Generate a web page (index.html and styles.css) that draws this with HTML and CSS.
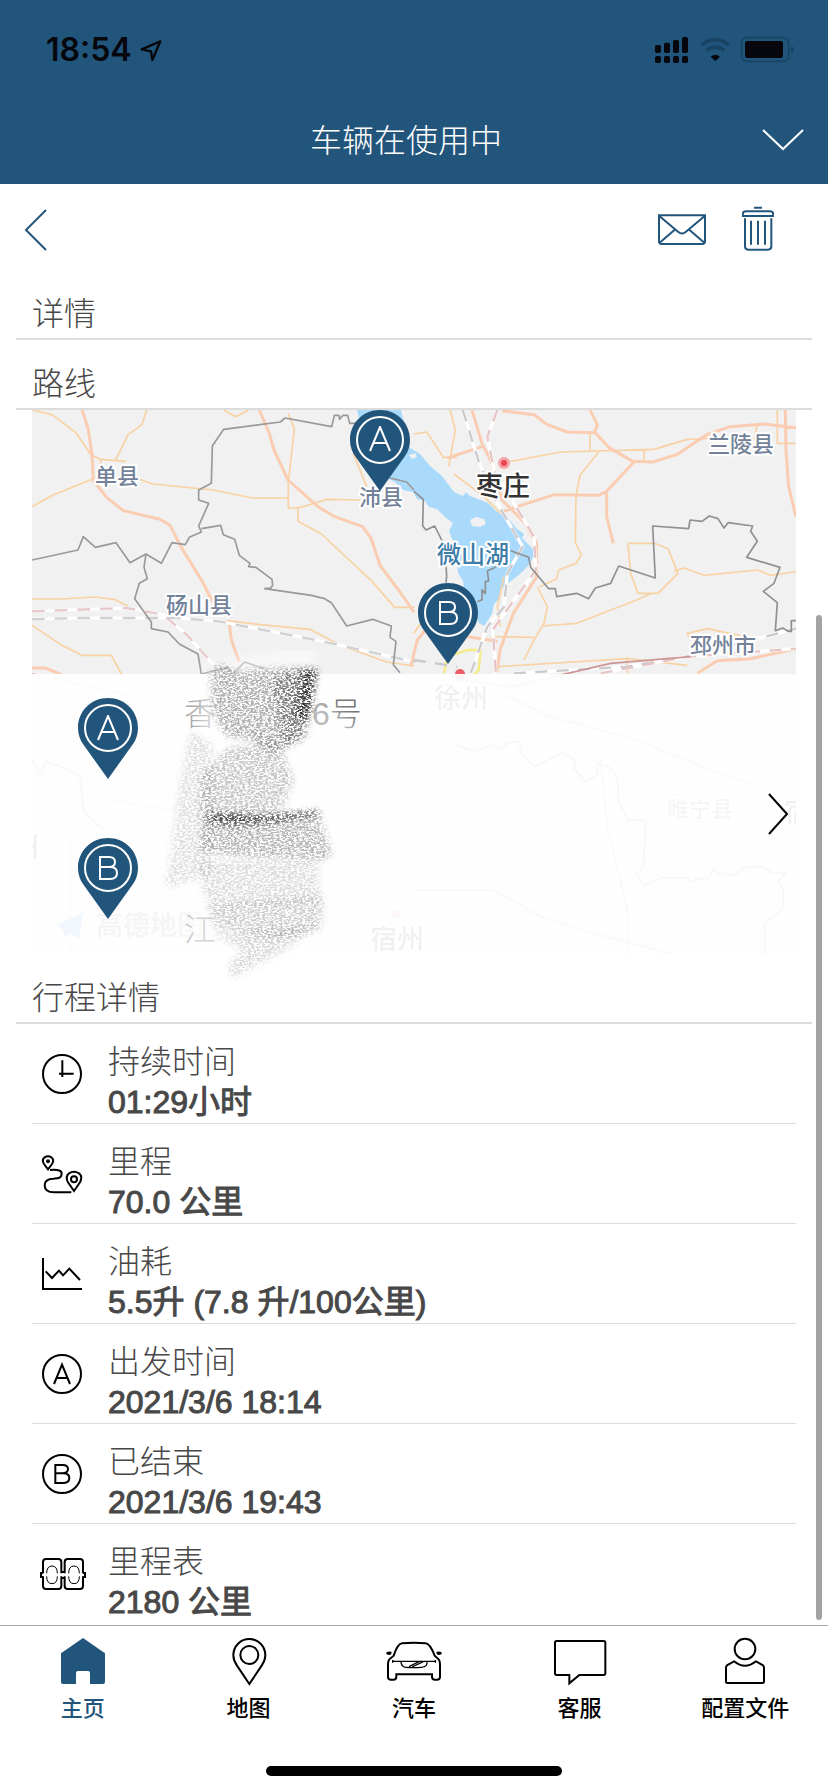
FILE: index.html
```html
<!DOCTYPE html>
<html lang="zh-CN">
<head>
<meta charset="utf-8">
<meta name="viewport" content="width=device-width, initial-scale=1">
<title>行程详情</title>
<link rel="stylesheet" href="styles.css">
</head>
<body>
<svg class="defs" width="0" height="0" aria-hidden="true">
  <defs>
    <symbol id="pin" viewBox="0 0 60 82">
      <path d="M30 0C13 0 0 13 0 30c0 6 2 12 5 16l25 35 25-35c3-4 5-10 5-16C60 13 47 0 30 0z" fill="#22557c"/>
      <circle cx="30" cy="30" r="23" fill="none" stroke="#fff" stroke-width="2"/>
    </symbol>
    <symbol id="letter-a" viewBox="0 0 24 26"><path d="M2 25 12 1l10 24M6 17h12" fill="none" stroke="currentColor" stroke-width="2"/></symbol>
    <symbol id="letter-b" viewBox="0 0 24 26"><path d="M4 2v22h10q7 0 7-6t-7-6H4h9q6 0 6-5t-6-5z" fill="none" stroke="currentColor" stroke-width="2"/></symbol>
  </defs>
</svg>

<header class="header">
  <div class="status">
    <div class="clock">
      <span>18:54</span>
      <svg width="22" height="22" viewBox="417 115 66 66" aria-hidden="true"><path d="M478 122 422 146l28 6 4 26z" fill="none" stroke="#05070c" stroke-width="7" stroke-linejoin="round"/></svg>
    </div>
    <svg width="142" height="30" viewBox="720 105 426 90" aria-hidden="true">
      <g fill="#05070c">
        <rect x="723" y="135" width="18" height="24" rx="5"/><rect x="750" y="128" width="18" height="31" rx="5"/><rect x="777" y="120" width="18" height="39" rx="5"/><rect x="804" y="111" width="18" height="48" rx="5"/>
        <rect x="723" y="168" width="18" height="21" rx="5"/><rect x="750" y="168" width="18" height="21" rx="5"/><rect x="777" y="168" width="18" height="21" rx="5"/><rect x="804" y="168" width="18" height="21" rx="5"/>
        <path d="M890 170q14-12 28 0l-14 13z"/>
        <rect x="993" y="123" width="114" height="51" rx="7"/>
      </g>
      <g fill="none" stroke="#184463">
        <path d="M863 135q41-32 82 0M877 152q27-21 54 0" stroke-width="11"/>
        <rect x="983" y="113" width="141" height="71" rx="16" stroke-width="5"/>
      </g>
      <path d="M1131 137q9 4 9 12t-9 12z" fill="#184463"/>
    </svg>
  </div>
  <div class="titlebar">
    <h1 class="title">车辆在使用中</h1>
    <button class="icon-button expand" aria-label="展开">
      <svg width="42" height="22" viewBox="0 0 42 22"><path d="M1 1l20 19L41 1" fill="none" stroke="#fff" stroke-width="2"/></svg>
    </button>
  </div>
</header>

<main class="content">
  <div class="toolbar">
    <button class="icon-button" aria-label="返回">
      <svg width="24" height="46" viewBox="0 0 24 46"><path d="M22 4 2 24l20 20" fill="none" stroke="#22557c" stroke-width="2"/></svg>
    </button>
    <div class="actions">
      <button class="icon-button" aria-label="发送邮件">
        <svg width="48" height="46" viewBox="732 616 144 138"><g fill="none" stroke="#22557c" stroke-width="6"><path d="M735 644h138v78q0 8-8 8H743q-8 0-8-8zM735 645l58 49q11 9 22 0l58-49M736 727l48-41M872 727l-48-41"/></g></svg>
      </button>
      <button class="icon-button" aria-label="删除">
        <svg width="32" height="46" viewBox="984 616 96 138"><g fill="none" stroke="#22557c" stroke-width="6"><path d="M1020 621h24M986 646v-4q0-10 10-10h72q10 0 10 10v4zM993 653v84q0 10 10 10h59q10 0 10-10v-84M1011 660v72M1032 660v72M1053 660v72"/></g></svg>
      </button>
    </div>
  </div>

  <h2 class="heading">详情</h2>
  <h2 class="heading">路线</h2>

  <section class="map" aria-label="路线">
    <svg class="map-canvas" viewBox="32 410 764 544" preserveAspectRatio="xMidYMid slice">
      <rect x="32" y="410" width="764" height="544" fill="#f1f1f1"/>
      <path fill="#a9dafc" d="M357 410h44l9 38 10 6 10 12 12 10 12 16 9 4 3-4 4 4 18 7 8 8 12 7 8 10 8 6-2 4 14 14-8 14-8 8-18 14-4 12-4 4-2 10-8 12-5-3-8-20-6-4-2-18-5-8-1-10-8-16 4-6-4-10 4-8-8-6-8-8-8-2-4-6-8-2-4-7-10-2-8-8-24-12z"/>
      <path fill="#f1f1f1" d="M470 520l6-3 8 2 2 5-6 3-8-1zM409 455l6-2 2 4-5 2z"/>
      <g transform="translate(0 280) scale(.33333)" fill="none" stroke-linejoin="round">
        <g stroke="#f8d2a2" stroke-width="5">
          <path d="M96 390l60 14 72 54 46 68 28 12 76 6M440 390l-14 44-42 30-38 78M96 680l62-34 122-50M418 598l40 14 180 18 120 24h108M865 400l18 46-18 160v78h30l86-26 100 2M894 680v44l70 38 150 140 70 80h60M1060 520l40 100M672 390l34 20 40-20M96 957h90l100-6 60 8 38 20M96 1036l90 60 60 30h88l30 56M680 1022l100 12 150 14 90 48 140 50 82 12M302 540v20"/>
        </g>
        <g stroke="#facdb2" stroke-width="9"><path d="M246 390l18 54 12 80 4 78 40 50 50 40 110 26 30 18 36 70 62 100 30 60M778 390l30 70 14 50 42 90 90 80 50 30 84 30 26 36 26 80 60 80 42 60M688 1030l6 50 24 66M96 1164h40l48 20"/></g>
        <g stroke="#fff" stroke-width="9"><path d="M96 994l284-10 110 20 70 60 90 100M96 1018l140-4h300l120 10 310 60 280 62"/></g>
        <g stroke="#e6c9cb" stroke-width="7" stroke-dasharray="38 30"><path d="M96 994l284-10 110 20 70 60 90 100"/></g>
        <g stroke="#cfd0d3" stroke-width="7" stroke-dasharray="38 30"><path d="M96 1018l140-4h300l120 10 310 60 280 62"/></g>
        <g stroke="#999" stroke-width="5"><path d="M96 840l138-30 16-40 36 32 62-14 42 60 48-26 46 28 32-62 40 6 12-22 36-16-8-18 30-68-30-10v-30l38-20 3-112 34-50 170-22 14-12 140 26 8-34h14l2 12 10-12h14l6 24h40M1170 594l50 12 22 24M604 746l58-10 8 28 34 14 14 48 32 24-4 10 22 2 48 36 2 18-6 8-18 2 140 20 40 10 20 12 46 70 78-20 56 20-4 34 18 12-8 70 20 24M438 822l-6 40 10 34-24 14-14 46 50 70v20l50 10 34 36 56 30 10 60 80-20 14 20 36-36 60 20"/></g>
      </g>
      <g transform="translate(414 380) scale(.33333)" fill="none" stroke-linejoin="round">
        <g stroke="#f8d2a2" stroke-width="5">
          <path d="M0 162l38-6 50 76h40M108 90l16 60-20 110M120 282l90 68 50 50M280 246l160-30 280-8 100-30 90-4M528 160v50M690 210v38M554 216l-56 70-12 60-2 140 18 40-16 24-52 20-6 26-50 24M642 490h80l40 16 30 74-60 60h-60l-22-60-8-88M780 574l30-10 60 22 160-16 40 16 80-12M384 738l104-8 180-70 46-20M370 620l30 60-10 50-30 50-30 60M640 830v50M250 860l390-24 180 20M830 780l-10-20 60-14 140 30M1090 90v100h54M1030 130l-10 50M270 590l-20 90 10 60M230 770l130 2M0 760l40-60"/>
        </g>
        <g stroke="#facdb2" stroke-width="9"><path d="M174 90l30 100 30 60 30 110 70 70 34 60v100l-70 110-40 110-10 70M264 92l96 12 40 30 60 22 84 2 40 44 72 42 60 2 72-22 90-60 70-24 102-8 100 12M528 90l22 44-8 22M660 246l-84 90-24 10-130-2-94 30-60 20M578 340v70l20 80M1114 90l2 120 8 110 22 90M100 234l104-34M160 770l90 14M850 880l60-38 100-6 136-30M-10 860l20-80 40-50"/></g>
        <g stroke="#f4ec80" stroke-width="7"><path d="M90 880l10-50 60-20h40l-6 60-20 20"/></g>
        <g stroke="#fff" stroke-width="10"><path d="M146 90l50 160 60 130 70 120-46 80-10 100-50 60-50 140M300 880l340-20 200-34 306-80M250 90l-30 80 20 100 60 100 60 100 6 100-80 110-50 70 10 130M560 880l260-50 326-24"/></g>
        <g stroke="#cbc9ce" stroke-width="7" stroke-dasharray="36 28"><path d="M146 90l50 160 60 130 70 120-46 80-10 100-50 60-50 140M300 880l340-20 200-34 306-80M0 840l130 20"/></g>
        <g stroke="#e6c5c6" stroke-width="7" stroke-dasharray="36 28"><path d="M250 90l-30 80 20 100 60 100 60 100 6 100-80 110-50 70 10 130M560 880l260-50 326-24"/></g>
        <g stroke="#8f9091" stroke-width="5"><path d="M0 334l28 24-2 80 10 12 26-12 30 60 6 90-2 20M190 665l14-6v-30l10 12v-36l10-2-4-30 26-12M290 512l54 20 6 30 54 64h20l4 24 60-10 36 16 20-32 46-14 24-52 110 36-8-156 108 8 4-26 36 4 22-16 26 8 18 28 12-16 74 10-6 16 20 30-32 48 100 30-18 48-32 24 42 34-6 84 22-8 16 10h10v-32h22"/></g>
        <g stroke="#cd9696" stroke-width="5"><path d="M20 940l120-40 150 20 300-70 240-20M280 950l130 60 260 70 220 90 120 40M560 1140l20 200 60 250v130M0 1530h240l140 80 160 50 260 70"/></g>
        <g stroke="#888" stroke-width="5"><path d="M130 1095l50 18 60-18 24 12 16-18 32-4 10 22-4 12 42 40 88-42 36 26-2 24 32 40 34-20 4-38 32 12 26 30 4 80 30 50h52l-8 140-20 22 22 34 54-24 74 2 20 12 8-12 34 4 20-36 12 20 24-4 20 8 40-26h50l30 18h40l-24 26 16 20v60l-56 46v100"/></g>
      </g>
      <g fill="none" stroke="#dcb2b2" stroke-width="2"><path d="M32 800h80l80 14M70 840v112M32 674l90 20 60 34"/><path stroke="#999" d="M32 760l8 14 6-12 14 4 20 10 4 36 20 18"/></g>
      <g class="place">
        <text x="95" y="484">单县</text><text x="359" y="505">沛县</text><text x="166" y="613">砀山县</text>
        <text x="708" y="452">兰陵县</text><text x="690" y="653">邳州市</text><text x="667" y="817">睢宁县</text>
      </g>
      <circle cx="504" cy="463" r="6" fill="#f5a5a8"/><circle cx="504" cy="463" r="3" fill="#e6454c"/>
      <circle cx="460" cy="674" r="5" fill="#ec5f66"/>
      <circle cx="396" cy="914" r="4" fill="#f28a8e"/>
      <g class="city">
        <text x="476" y="496">枣庄</text><text x="434" y="708">徐州</text><text x="370" y="949">宿州</text><text x="784" y="822">宿迁</text><text x="12" y="857">州</text>
      </g>
      <text class="lake" x="437" y="563">微山湖</text>
      <path d="M56 925l28-13-5 27-10-6-5 5-1-8z" fill="#4a94ea"/>
      <text class="brand" x="96" y="935">高德地图</text>
      <g color="#fff">
        <use href="#pin" x="350" y="410" width="60" height="82"/><use href="#letter-a" x="368" y="426" width="24" height="26"/>
        <use href="#pin" x="418" y="583" width="60" height="82"/><use href="#letter-b" x="436" y="600" width="24" height="26"/>
      </g>
    </svg>
    <button class="route" aria-label="查看路线">
      <span class="stops">
        <span class="stop">
          <svg width="60" height="82" viewBox="0 0 60 82" color="#fff"><use href="#pin" width="60" height="82"/><use href="#letter-a" x="18" y="17" width="24" height="26"/></svg>
          <span class="address"><span>香</span><span class="number">6号</span></span>
        </span>
        <span class="stop">
          <svg width="60" height="82" viewBox="0 0 60 82" color="#fff"><use href="#pin" width="60" height="82"/><use href="#letter-b" x="18" y="17" width="24" height="26"/></svg>
          <span class="address last">江</span>
        </span>
      </span>
      <svg width="22" height="42" viewBox="0 0 22 42"><path d="M2 1l18 20L2 41" fill="none" stroke="#000" stroke-width="2"/></svg>
    </button>
    <svg class="scribble" width="220" height="340" viewBox="150 650 220 340" aria-hidden="true">
      <defs>
        <filter id="chalk" x="-10%" y="-10%" width="120%" height="120%">
          <feGaussianBlur in="SourceGraphic" stdDeviation="3" result="soft"/>
          <feTurbulence type="fractalNoise" baseFrequency=".35 .6" numOctaves="4" seed="4"/>
          <feColorMatrix values="0 0 0 0 0  0 0 0 0 0  0 0 0 0 0  5 0 0 0 -2"/>
          <feComposite in="soft" operator="in"/>
        </filter>
        <filter id="mist"><feGaussianBlur stdDeviation="6"/></filter>
      </defs>
      <path opacity=".5" fill="#fff" filter="url(#mist)" d="M205 664l110-20v50l50 40-20 240-160-20z"/>
      <g fill="#222" filter="url(#chalk)">
        <path opacity=".35" d="M210 672l12-8 14 8 34-4 44 0-12 70-28 16-24-14-24-4-14-24z"/>
        <path opacity=".4" d="M272 680l20-10 24-2-10 70-22 10z"/>
        <path opacity=".25" d="M228 748l50-8 16 40-12 30-82 10 2-46z"/>
        <path opacity=".15" d="M190 730l22 14-2 130-44 14 12-90z"/>
        <path opacity=".32" d="M204 816l114-4 14 42-8 6-90-4-34-4z"/>
        <path opacity=".16" d="M200 860h118l2 40-110 8-8-20z"/>
        <path opacity=".22" d="M208 906l116-10-4 34-40 8-66-10z"/>
        <path opacity=".18" d="M212 934l106-8-40 28-46 24-4-14 16-14z"/>
      </g>
      <g fill="#111" filter="url(#chalk)"><path opacity=".7" d="M304 670h14l-9 50h-14zM210 813l60 2 50-4v4l-56 8-30 2-24-2z"/></g>
    </svg>
  </section>

  <h2 class="heading">行程详情</h2>
  <ul class="rows">
    <li class="row">
      <svg class="row-icon" viewBox="126 132 120 120"><g fill="none" stroke="#000" stroke-width="6"><circle cx="186" cy="192" r="57"/><path d="M187 151v50M177 191h44"/></g></svg>
      <dl class="fact"><dt>持续时间</dt><dd>01:29小时</dd></dl>
    </li>
    <li class="row">
      <svg class="row-icon" viewBox="126 434 120 120"><g fill="none" stroke="#000" stroke-width="6"><path d="M144 480l-12-16q-8-13 2-20 10-7 20 0 10 8 2 20zM222 545l-18-26q-9-18 3-27 15-9 30 0 12 10 3 27zM150 482c26-2 36 2 35 13-1 12-12 12-24 13-20 0-27 7-27 20 0 14 10 21 28 21h52"/><circle cx="222" cy="510" r="9"/></g><circle cx="144" cy="456" r="6"/></svg>
      <dl class="fact"><dt>里程</dt><dd>70.0 公里</dd></dl>
    </li>
    <li class="row">
      <svg class="row-icon" viewBox="126 732 120 120"><path d="M129 744v93h117M137 784l19 20 21-22 12 14 19-20 32 34" fill="none" stroke="#000" stroke-width="6"/></svg>
      <dl class="fact"><dt>油耗</dt><dd>5.5升 (7.8 升/100公里)</dd></dl>
    </li>
    <li class="row">
      <svg class="row-icon" viewBox="126 102 120 120"><g fill="none" stroke="#000" stroke-width="6"><circle cx="186" cy="162" r="57"/><path d="M162 192l24-58 24 58M170 174h32"/></g></svg>
      <dl class="fact"><dt>出发时间</dt><dd>2021/3/6 18:14</dd></dl>
    </li>
    <li class="row">
      <svg class="row-icon" viewBox="126 402 120 120"><g fill="none" stroke="#000" stroke-width="6"><circle cx="186" cy="462" r="57"/><path d="M166 435v54h22q20 0 20-15t-20-14h-22 20q18 0 18-13t-18-12z"/></g></svg>
      <dl class="fact"><dt>已结束</dt><dd>2021/3/6 19:43</dd></dl>
    </li>
    <li class="row">
      <svg class="row-icon" viewBox="126 702 120 120"><g fill="none" stroke="#000" stroke-width="6"><path d="M129 760v-34q0-9 9-9h37q9 0 9 9v34M129 769v29q0 9 9 9h37q9 0 9-9v-29M194 760v-34q0-9 9-9h37q9 0 9 9v34M194 769v29q0 9 9 9h37q9 0 9-9v-29M129 759h-6v12h6M249 759h6v12h-6"/><path d="M184 756h10M184 774h10"/><path stroke-width="3" d="M140 760q0-22 16-22t16 22M140 769q0 22 16 22t16-22M206 760q0-22 16-22t16 22M206 769q0 22 16 22t16-22"/></g></svg>
      <dl class="fact"><dt>里程表</dt><dd>2180 公里</dd></dl>
    </li>
  </ul>
  <div class="scrollbar"></div>
</main>

<footer class="footer">
  <nav class="tabs">
    <a class="tab active" href="#home"><svg viewBox="159 108 180 150"><path d="M249 114l66 46v86q0 6-6 6h-39v-33q0-6-6-6h-30q-6 0-6 6v33h-39q-6 0-6-6v-86z" fill="#22557c"/></svg>主页</a>
    <a class="tab" href="#map"><svg viewBox="656 108 180 150"><g class="line"><path d="M750 252l-37-55q-11-16-11-31a48 49 0 0 1 96 0q0 15-11 31z"/><circle cx="750" cy="165" r="27"/></g></svg>地图</a>
    <a class="tab" href="#car"><svg viewBox="28 48 180 150"><g class="line"><path d="M57 107q12-36 25-37 35-4 71 0 13 1 27 37l12 11q4 5 4 14v39q0 8-9 8h-6q-9 0-9-9v-7H65v7q0 9-9 9h-7q-9 0-9-8v-39q0-9 4-14z"/><path stroke-width="4" d="M54 120v8M54 124h25M182 120v8M182 124h-25M79 124h78q2 17-16 18-24 2-48 0-14-1-14-18zM103 140l30-15M112 141l34-16"/></g><path d="M34 100q1-7 16-5 3 8-7 10-7 0-9-5zM202 100q-1-7-16-5-3 8 7 10 7 0 9-5z"/></svg>汽车</a>
    <a class="tab" href="#service"><svg viewBox="405 108 180 150"><path class="line" d="M425 123h141q5 0 5 5v92q0 5-5 5h-73l-30 25v-25h-38q-5 0-5-5v-92q0-5 5-5z"/></svg>客服</a>
    <a class="tab" href="#profile"><svg viewBox="903 108 180 150"><g class="line"><circle cx="993" cy="147" r="31"/><path d="M960 184q33 27 66 0l20 11q4 3 4 9v41q0 4-4 4H940q-4 0-4-4v-41q0-6 4-9z"/></g></svg>配置文件</a>
  </nav>
  <div class="home-bar"></div>
</footer>
</body>
</html>
```
FILE: styles.css
```css
* { box-sizing: border-box; }

body {
  margin: 0;
  min-height: 100vh;
  display: flex;
  flex-direction: column;
  background: #fff;
  color: #484848;
  font-family: "Liberation Sans", "Noto Sans CJK SC", sans-serif;
}

h1, h2, ul, dl, dd { margin: 0; padding: 0; }
svg { display: block; }
.defs { position: absolute; }
button { padding: 0; border: 0; background: none; font: inherit; color: inherit; cursor: pointer; }

.header { height: 184px; background: #22557c; color: #fff; }
.status { display: flex; justify-content: space-between; align-items: center; height: 100px; padding: 0 32px 0 46px; }
.clock { display: flex; align-items: center; gap: 8px; color: #05070c; font: 600 32px/40px Inter, sans-serif; }
.titlebar { display: grid; grid-template-columns: 1fr auto 1fr; align-items: center; height: 80px; padding: 0 24px 0 8px; }
.title { grid-column: 2; padding-top: 2px; font-size: 32px; font-weight: 300; line-height: 40px; }
.expand { justify-self: end; }

.content { position: relative; flex: 1; }
.toolbar { display: flex; justify-content: space-between; align-items: center; height: 86px; padding: 4px 54px 0 24px; }
.actions { display: flex; gap: 36px; }

.heading {
  height: 70px;
  margin: 0 16px;
  padding: 24px 16px 0;
  border-bottom: 2px solid #dcdcdc;
  font-size: 32px;
  font-weight: 300;
  line-height: 40px;
}

.map { position: relative; height: 544px; margin: 0 32px; }
.map-canvas { width: 100%; height: 100%; }
.place, .city, .lake { stroke: #fff; stroke-width: 4px; stroke-linejoin: round; paint-order: stroke; font-weight: 500; }
.place { font-size: 22px; fill: #738299; }
.city { font-size: 27px; fill: #333; }
.lake { font-size: 24px; fill: #3d7da8; }
.brand { font-size: 27px; font-weight: 700; fill: #777; }

.route {
  position: absolute;
  inset: 264px 0 0;
  display: flex;
  justify-content: space-between;
  align-items: center;
  padding-right: 7px;
  background: rgba(255, 255, 255, 0.93);
  text-align: left;
}
.stops { display: block; }
.stop { display: flex; gap: 46px; height: 140px; padding: 24px 0 0 46px; }
.address { display: flex; gap: 96px; font-size: 32px; font-weight: 300; line-height: 32px; color: #aaa; }
.number { color: #777; }
.address.last { align-items: flex-end; padding-bottom: 8px; }
.scribble { position: absolute; left: 118px; top: 240px; pointer-events: none; }

.rows { margin: 0 32px; list-style: none; }
.row { display: flex; align-items: center; gap: 26px; height: 100px; padding-left: 10px; border-bottom: 1px solid #dcdcdc; }
.row:last-child { border-bottom: 0; }
.row-icon { width: 40px; height: 40px; overflow: visible; }
.fact { padding-top: 16px; font-size: 32px; line-height: 40px; }
.fact dt { font-weight: 300; }
.fact dd { font-weight: 400; -webkit-text-stroke: 1px currentColor; }

.scrollbar { position: absolute; top: 431px; bottom: 5px; right: 6px; width: 6px; border-radius: 3px; background: #a3a3a3; }

.footer { border-top: 1px solid #aaa; padding: 10px 0 16px; }
.tabs { display: grid; grid-template-columns: repeat(5, 1fr); }
.tab {
  display: flex;
  flex-direction: column;
  align-items: center;
  gap: 9px;
  color: #000;
  font-size: 22px;
  font-weight: 500;
  line-height: 28px;
  text-decoration: none;
}
.tab.active { color: #22557c; }
.tab svg { width: 60px; height: 50px; }
.line { fill: none; stroke: #000; stroke-width: 6px; }
.home-bar { width: 296px; height: 10px; margin: 43px auto 0; border-radius: 5px; background: #000; }
```
